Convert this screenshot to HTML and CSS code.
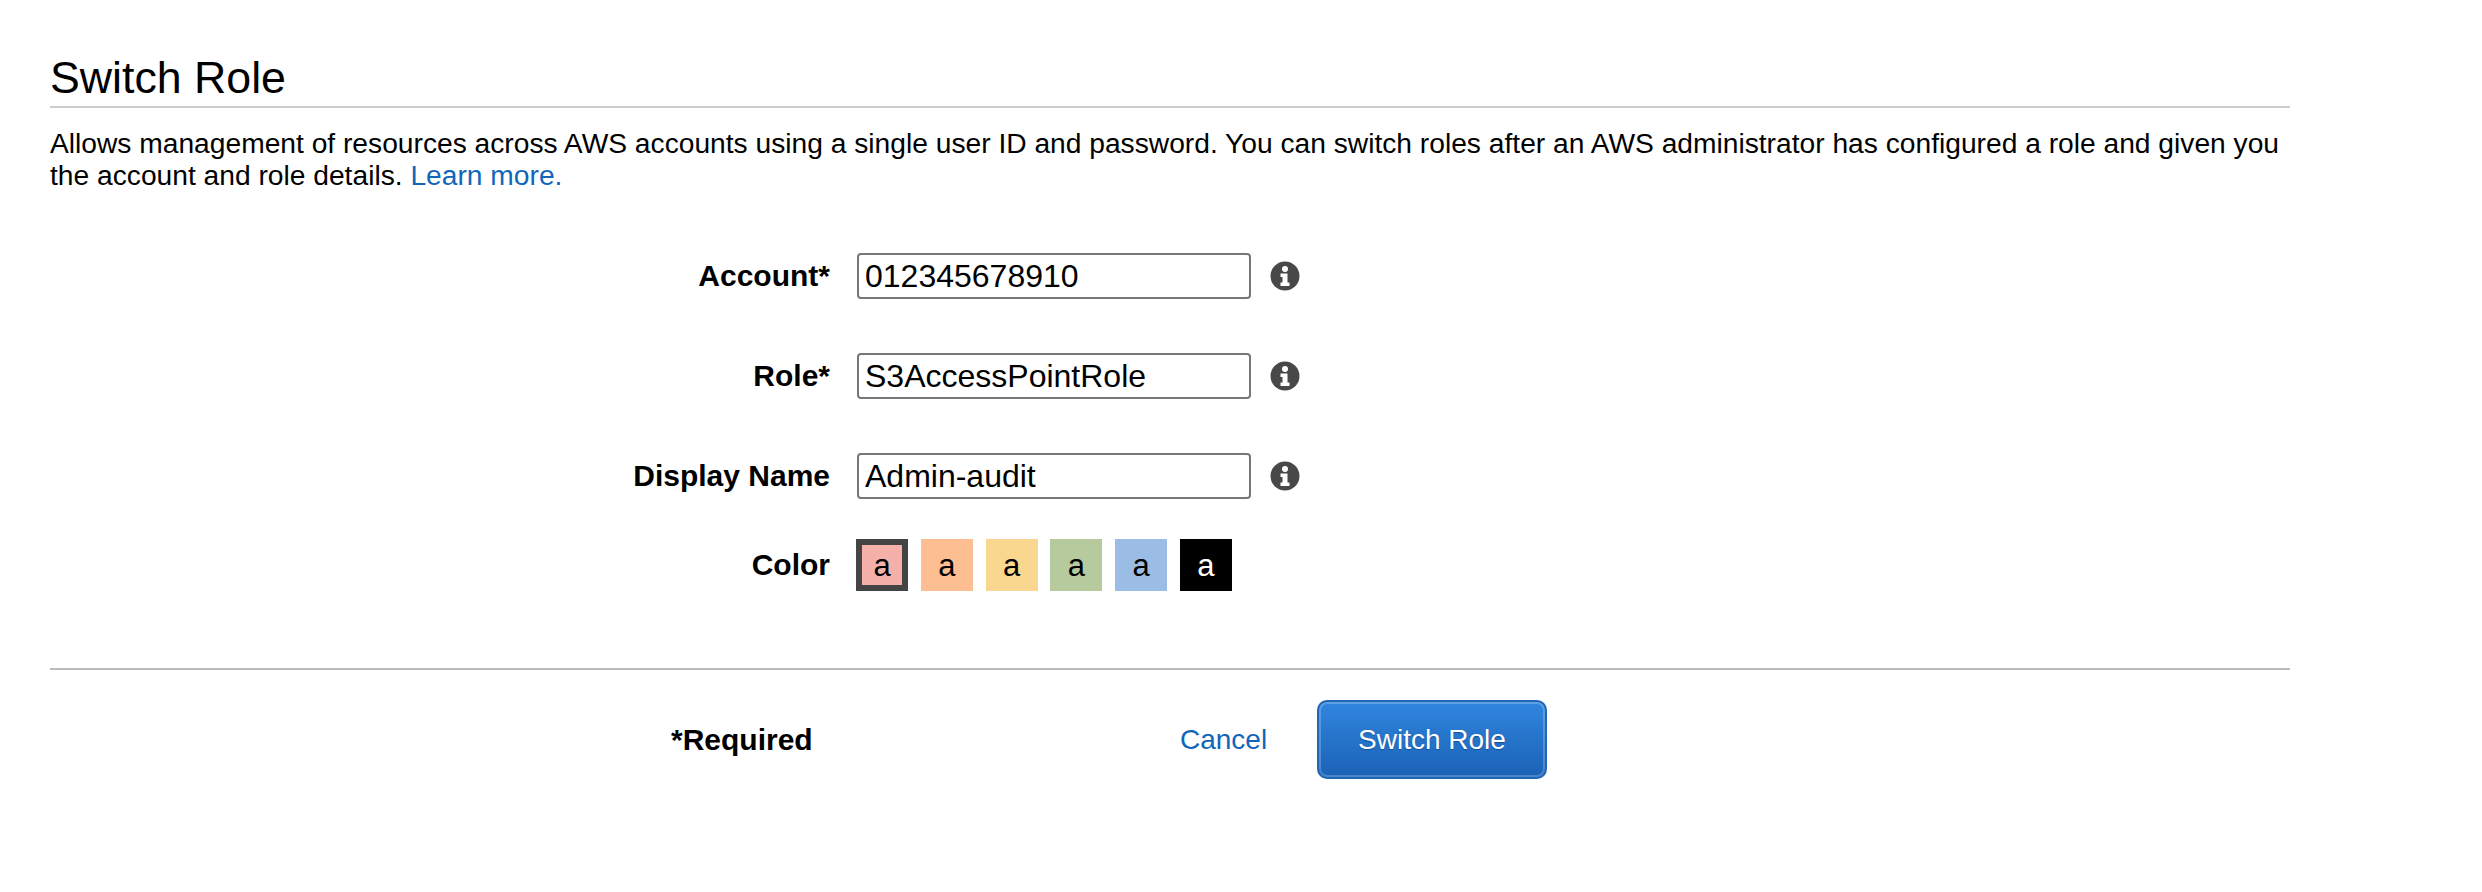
FILE: index.html
```html
<!DOCTYPE html>
<html lang="en">

<head>
    <meta charset="UTF-8">
    <title>Switch Role</title>
    <link rel="stylesheet" href="styles.css">
</head>

<body>
    <div class="main">
        <h1 class="title">Switch Role</h1>
        <p class="intro">Allows management of resources across AWS accounts using a single user ID and password. You can switch roles after an AWS administrator has configured a role and given you the account and role details. <a href="#">Learn more.</a></p>

        <form class="form">
            <div class="row">
                <label for="account">Account*</label>
                <input type="text" id="account" value="012345678910">
                <svg class="info" viewBox="0 0 30 30"><use href="#infoIcon"></use></svg>
            </div>
            <div class="row">
                <label for="role">Role*</label>
                <input type="text" id="role" value="S3AccessPointRole">
                <svg class="info" viewBox="0 0 30 30"><use href="#infoIcon"></use></svg>
            </div>
            <div class="row">
                <label for="displayName">Display Name</label>
                <input type="text" id="displayName" value="Admin-audit">
                <svg class="info" viewBox="0 0 30 30"><use href="#infoIcon"></use></svg>
            </div>
            <div class="row color_row">
                <label>Color</label>
                <div class="swatches">
                    <span class="swatch red selected">a</span>
                    <span class="swatch orange">a</span>
                    <span class="swatch yellow">a</span>
                    <span class="swatch green">a</span>
                    <span class="swatch blue">a</span>
                    <span class="swatch black">a</span>
                </div>
            </div>
        </form>

        <div class="footer">
            <span class="required">*Required</span>
            <a href="#" class="cancel">Cancel</a>
            <button type="button" class="btn">Switch Role</button>
        </div>
    </div>

    <svg width="0" height="0" class="defs">
        <symbol id="infoIcon" viewBox="0 0 30 30">
            <circle cx="15" cy="15" r="14.5" fill="#484848"></circle>
            <circle cx="15" cy="8" r="3" fill="#fff"></circle>
            <path d="M10.500 12.500h7v9h2v3.500h-9v-3.500h2v-5.500h-2z" fill="#fff"></path>
        </symbol>
    </svg>
</body>

</html>
```

FILE: styles.css
```css
body {
    margin: 0;
    background-color: #fff;
    color: #000;
    font-family: "Liberation Sans", Arial, sans-serif;
}

a {
    color: #1166bb;
    text-decoration: none;
}

.main {
    width: 2240px;
    margin-left: 50px;
}

.title {
    margin: 0;
    height: 108px;
    box-sizing: border-box;
    padding-top: 52px;
    border-bottom: 2px solid #ccc;
    font-size: 44.7px;
    line-height: 52px;
    font-weight: normal;
}

.intro {
    margin: 19px 0 0;
    font-size: 28.2px;
    line-height: 32px;
}

.form {
    margin-top: 62px;
    padding-bottom: 77px;
    border-bottom: 2px solid #bbb;
}

.row {
    display: flex;
    align-items: center;
    height: 46px;
    margin-bottom: 54px;
}

.row label {
    width: 780px;
    margin-right: 27px;
    text-align: right;
    font-size: 30px;
    font-weight: bold;
}

.row input {
    width: 394px;
    height: 46px;
    box-sizing: border-box;
    padding: 0 6px;
    border: 2px solid #777;
    border-radius: 4px;
    font-family: inherit;
    font-size: 32px;
    color: #000;
    outline: none;
}

.info {
    width: 30px;
    height: 30px;
    margin-left: 19px;
}

.defs {
    position: absolute;
}

.color_row {
    height: 52px;
    margin-bottom: 0;
    margin-top: -14px;
}

.swatches {
    display: flex;
    gap: 12.800px;
    margin-left: -1px;
}

.swatch {
    width: 52px;
    height: 52px;
    box-sizing: border-box;
    text-align: center;
    font-size: 31px;
    line-height: 54px;
}

.selected {
    border: 6px solid #444;
    line-height: 42px;
}

.red { background-color: #f4b0a9; }
.orange { background-color: #fdbf92; }
.yellow { background-color: #fad78f; }
.green { background-color: #b7ca9d; }
.blue { background-color: #9bbce4; }
.black { background-color: #000; color: #fff; }

.footer {
    display: flex;
    align-items: center;
    margin-top: 30px;
    padding-left: 621px;
}

.required {
    width: 509px;
    font-size: 30px;
    font-weight: bold;
}

.cancel {
    width: 137px;
    font-size: 28px;
}

.btn {
    width: 230px;
    height: 79px;
    border: 2px solid #1f66b8;
    border-radius: 10px;
    background: linear-gradient(#3185de, #1a62b6);
    box-shadow: inset 0 0 0 2px rgba(255, 255, 255, 0.22);
    color: #fff;
    font-family: inherit;
    font-size: 28px;
    text-shadow: 0 1px 1px #174f94;
}
```
